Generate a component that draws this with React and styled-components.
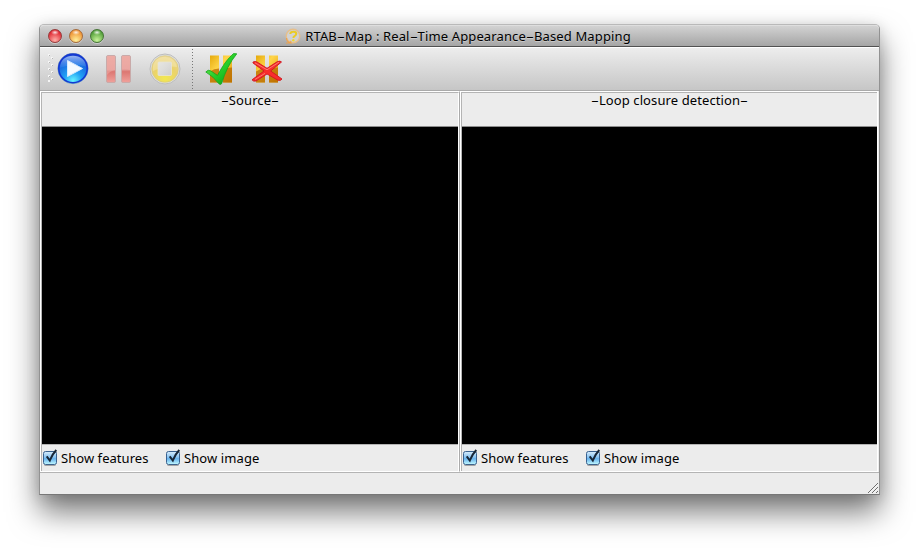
import React from 'react';
import styled, { createGlobalStyle } from 'styled-components';

const GlobalStyle = createGlobalStyle`
  * { box-sizing: border-box; }
  body { margin: 0; background: #fff; overflow: hidden; font-family: "Noto Sans", "Open Sans", sans-serif; font-size: 13px; color: #000; }
`;

const Desktop = styled.main`
  width: 919px;
  height: 549px;
  padding: 24px 39px 54px;
  overflow: hidden;
`;

const Window = styled.section`
  width: 841px;
  height: 471px;
  display: flex;
  flex-direction: column;
  background: #ececec;
  border: 1px solid #929292;
  border-top-color: #b9b9b9;
  border-bottom-color: #777;
  border-radius: 5px 5px 0 0;
  box-shadow: 0 17px 30px rgba(0, 0, 0, 0.53), 0 2px 14px rgba(0, 0, 0, 0.13);
`;

const TitleBar = styled.header`
  height: 22px;
  flex: none;
  display: grid;
  grid-template-columns: 100px 1fr 103px;
  align-items: center;
  background: linear-gradient(#d2d2d2, #a5a5a5);
  border-top: 1px solid #dedede;
  border-bottom: 1px solid #515151;
  border-radius: 4px 4px 0 0;
`;

const Lights = styled.div`
  display: flex;
  gap: 7px;
  padding-left: 8px;
`;

const Light = styled.span`
  width: 14px;
  height: 14px;
  border-radius: 50%;
  border: 1px solid ${(p) => p.$edge};
  background: radial-gradient(ellipse 4px 2.5px at 50% 20%, #fffd, #fff0),
    radial-gradient(circle at 50% 85%, ${(p) => p.$glow}, ${(p) => p.$tone} 75%);
  box-shadow: 0 1px 0 #ffffff66;
`;

const Title = styled.h1`
  display: flex;
  align-items: center;
  justify-content: center;
  gap: 4px;
  margin: 0;
  font-size: 13px;
  font-weight: 400;
  line-height: 20px;
  text-shadow: 0 1px 0 #ffffff55;
`;

const Label = styled.span`
  white-space: pre;
  letter-spacing: ${(p) => p.$spacing || 0}px;
`;

const Dash = styled.span`
  display: inline-block;
  width: 8px;
  text-align: center;
  letter-spacing: 0;
  transform: scaleX(1.9);
`;

const ToolBar = styled.nav`
  height: 44px;
  flex: none;
  display: flex;
  align-items: center;
  padding-left: 7px;
  background: linear-gradient(#ededed, #c6c6c6);
  border-top: 1px solid #fff;
  border-bottom: 1px solid #aaa;
`;

const Handle = styled.span`
  width: 10px;
  height: 30px;
  svg { display: block; }
`;

const ToolButton = styled.button`
  width: 32px;
  height: 32px;
  margin-right: ${(p) => p.$gap}px;
  padding: 0;
  border: 0;
  background: none;
  svg { display: block; }
`;

const Separator = styled.span`
  width: 1px;
  height: 41px;
  margin-right: 12px;
  background: repeating-linear-gradient(#777 0 1px, transparent 1px 3px);
`;

const Panels = styled.div`
  height: 382px;
  flex: none;
  display: grid;
  grid-template-columns: 420px 418px;
  border-bottom: 1px solid #b4b4b4;
`;

const Panel = styled.article`
  display: flex;
  flex-direction: column;
  border: 1px solid #fff;
  border-right: ${(p) => (p.$last ? '1px solid #fff' : '1px solid #aaa')};
`;

const PanelBody = styled.div`
  flex: 1;
  display: flex;
  flex-direction: column;
  border-top: 1px solid #b4b4b4;
  border-left: 1px solid #b4b4b4;
  border-right: ${(p) => (p.$last ? '0' : '1px solid #fff')};
`;

const PanelTitle = styled.h2`
  height: 34px;
  flex: none;
  margin: 0;
  font-size: 13px;
  font-weight: 400;
  line-height: 15px;
  text-align: center;
  border-bottom: 1px solid #8d8d8d;
`;

const Viewport = styled.div`
  height: 317px;
  flex: none;
  background: #000;
`;

const Options = styled.div`
  flex: 1;
  display: flex;
  align-items: center;
  border-top: 1px solid #b4b4b4;
`;

const Option = styled.label`
  display: flex;
  align-items: center;
  gap: 1px;
  width: ${(p) => p.$width}px;
  line-height: 18px;
`;

const StatusBar = styled.footer`
  flex: 1;
  display: flex;
  align-items: flex-end;
  justify-content: flex-end;
`;

const Grip = () => (
  <svg width="7" height="30" viewBox="0 0 7 30">
    {[0, 7, 14, 21].map((y) => (
      <g key={y} fill="#f5f5f5">
        <path d={`M1 ${y}h2v2H1zM4 ${y + 3}h2v2H4z`} />
        <path fill="#b5b5b5" d={`M2 ${y + 1}h1v1H2zM5 ${y + 4}h1v1H5z`} />
      </g>
    ))}
    <path fill="#f5f5f5" d="M1 26h2v2H1z" />
  </svg>
);

const PlayIcon = () => (
  <svg width="32" height="32" viewBox="0 0 32 32">
    <defs>
      <radialGradient id="playFill" cx=".5" cy=".9" r=".85">
        <stop offset="0" stopColor="#68f4ff" />
        <stop offset=".35" stopColor="#20a0f4" />
        <stop offset="1" stopColor="#1440cf" />
      </radialGradient>
      <linearGradient id="playGloss" x2="0" y2="1">
        <stop stopColor="#d5e5ff" stopOpacity=".7" />
        <stop offset="1" stopColor="#6db0ff" stopOpacity=".12" />
      </linearGradient>
    </defs>
    <circle cx="16" cy="15.5" r="15.2" fill="url(#playFill)" stroke="#7d98b5" strokeWidth=".7" />
    <circle cx="16" cy="15.5" r="14.2" fill="none" stroke="#1537d2" strokeWidth="1.5" />
    <path d="M3 15C3 7 9 2.8 16 2.8s13 4 13 11c-6-3-18-2-26 1z" fill="url(#playGloss)" />
    <path d="M10.5 7.5v16L25.5 15.5z" fill="#f4faff" stroke="#d6eaff" strokeLinejoin="round" />
  </svg>
);

const PauseIcon = () => (
  <svg width="32" height="32" viewBox="0 0 32 32">
    <defs>
      <linearGradient id="pauseFill" x2="0" y2="1">
        <stop stopColor="#eba39d" />
        <stop offset=".52" stopColor="#e49a96" />
        <stop offset=".6" stopColor="#dc7772" />
        <stop offset="1" stopColor="#f0a19b" />
      </linearGradient>
    </defs>
    <g fill="url(#pauseFill)" stroke="#c9aaa9">
      <rect x="3.5" y="2.5" width="9" height="27" rx="1.5" />
      <rect x="18.5" y="2.5" width="9" height="27" rx="1.5" />
    </g>
    <path d="M4 3h8v14q-5 1-8 5zM19 3h8v14q-4-1-8-.5z" fill="#f1b5b0" opacity=".45" />
  </svg>
);

const StopIcon = () => (
  <svg width="32" height="32" viewBox="0 0 32 32">
    <defs>
      <radialGradient id="stopFill" cx=".5" cy=".85" r=".85">
        <stop stopColor="#f2e850" />
        <stop offset=".55" stopColor="#ead26b" />
        <stop offset="1" stopColor="#eed99a" />
      </radialGradient>
      <linearGradient id="stopSquare" x2="1" y2="1">
        <stop stopColor="#e6e6e2" />
        <stop offset=".5" stopColor="#dcdcda" />
        <stop offset="1" stopColor="#cfcfcc" />
      </linearGradient>
    </defs>
    <circle cx="16" cy="16" r="15" fill="#dedede" stroke="#bdbdbd" />
    <circle cx="16" cy="16" r="13.3" fill="url(#stopFill)" stroke="#d4c780" strokeWidth=".6" />
    <path d="M4 13C6 6 10 4 16 4s11 4 12 10q-11-2-24 4z" fill="#f8eec0" opacity=".4" />
    <rect x="9" y="9" width="13.5" height="13.5" rx="1" fill="url(#stopSquare)" stroke="#e8e5d2" strokeWidth=".8" />
  </svg>
);

const GoldBars = ({ x, y }) => (
  <g transform={`translate(${x} ${y})`}>
    <path d="M0 0h9v27H0zM13 0h9v27h-9z" fill="url(#gold)" />
    <path d="M0 16q4-3 9-3v14H0zM13 13l9-1v15h-9z" fill="#b76a00" opacity=".75" />
  </g>
);

const AcceptIcon = () => (
  <svg width="32" height="32" viewBox="0 0 32 32">
    <defs>
      <linearGradient id="gold" x2="1" y2="1">
        <stop stopColor="#e5a90b" />
        <stop offset=".4" stopColor="#ffd549" />
        <stop offset="1" stopColor="#d99000" />
      </linearGradient>
      <linearGradient id="checkFill" x2="1" y2="1">
        <stop stopColor="#84f164" />
        <stop offset=".5" stopColor="#26cf29" />
        <stop offset="1" stopColor="#079414" />
      </linearGradient>
    </defs>
    <GoldBars x={5} y={2.5} />
    <path d="M.8 19Q3 16 6 18l6.5 4.4C18 12 23 5.5 28.5.6l3.3.2C25 9 20 19 16.6 30.7q-1.3 1.5-2.8 0Q8.5 23.5.8 19z" fill="url(#checkFill)" stroke="#16a51c" strokeWidth=".8" />
  </svg>
);

const RejectIcon = () => (
  <svg width="32" height="32" viewBox="0 0 32 32">
    <GoldBars x={5} y={2.5} />
    <path d="M2 9q2-1 4 0l10 6.3L26.5 8.5q3-1 4 .5L19.7 18 31 26q-1 2-4 1.2L16 21 5 28q-3 .6-4-1.2L13 18 2 10z" fill="#f82d2d" stroke="#cf1721" strokeWidth=".9" strokeLinejoin="round" />
    <path d="M4 9.8l12 7L28 9.2M4 26.4l10-6" fill="none" stroke="#ff8075" strokeWidth=".9" />
  </svg>
);

const AppIcon = () => (
  <svg width="16" height="16" viewBox="0 0 16 16">
    <circle cx="8" cy="8" r="6.8" fill="#d2d2d2" stroke="#e6bf8b" strokeWidth="1.4" />
    <path d="M1.5 10q0 4 4.5 5l-.3-2.3M1 15h5" fill="none" stroke="#eea34e" strokeWidth="1.1" />
    <path d="M5.3 6Q5.5 3.8 8.4 3.8t2.9 2.1Q11 7.3 9.2 8.3q-.8.5-.8 1.8" fill="none" stroke="#eacb24" strokeWidth="2" />
    <circle cx="8.3" cy="12.2" r="1.2" fill="#f1d72d" />
  </svg>
);

const CheckIcon = () => (
  <svg width="18" height="18" viewBox="0 0 18 18">
    <defs>
      <linearGradient id="boxFill" x2="0" y2="1">
        <stop stopColor="#d9edfb" />
        <stop offset=".45" stopColor="#87c2f1" />
        <stop offset=".55" stopColor="#68b2ed" />
        <stop offset="1" stopColor="#c3faff" />
      </linearGradient>
    </defs>
    <rect x="1.5" y="2.5" width="13" height="13" rx="2" fill="url(#boxFill)" stroke="#39618f" />
    <path d="M2.5 16.4h11" stroke="#888" strokeWidth=".8" />
    <path d="M4.7 7.3l3.1 4.2Q10 5.5 14.3 1" fill="none" stroke="#172536" strokeWidth="2" />
  </svg>
);

const ResizeGrip = () => (
  <svg width="12" height="12" viewBox="0 0 12 12">
    <path d="M1 11L11 1M5 11l6-6M9 11l2-2" stroke="#6e6e6e" />
    <path d="M2.2 11.2l9-9M6.2 11.2l5-5" stroke="#fff" strokeWidth=".6" />
  </svg>
);

const ImagePanel = ({ title, spacing, last }) => (
  <Panel $last={last}>
    <PanelBody $last={last}>
      <PanelTitle>
        <Label $spacing={spacing}><Dash>-</Dash>{title}<Dash>-</Dash></Label>
      </PanelTitle>
      <Viewport />
      <Options>
        <Option $width={123}><CheckIcon /><Label $spacing={0.05}>Show features</Label></Option>
        <Option><CheckIcon /><Label $spacing={0.1}>Show image</Label></Option>
      </Options>
    </PanelBody>
  </Panel>
);

export default function App() {
  return (
    <>
      <GlobalStyle />
      <Desktop>
        <Window>
          <TitleBar>
            <Lights>
              <Light $edge="#963b3b" $tone="#df2530" $glow="#ffb0a8" />
              <Light $edge="#a56a3a" $tone="#ee9132" $glow="#fff09a" />
              <Light $edge="#457435" $tone="#4f9d36" $glow="#c9f49b" />
            </Lights>
            <Title>
              <AppIcon />
              <Label $spacing={0.13}>RTAB<Dash>-</Dash>Map : Real<Dash>-</Dash>Time Appearance<Dash>-</Dash>Based Mapping</Label>
            </Title>
          </TitleBar>
          <ToolBar>
            <Handle><Grip /></Handle>
            <ToolButton aria-label="Play" $gap={14}><PlayIcon /></ToolButton>
            <ToolButton aria-label="Pause" $gap={14}><PauseIcon /></ToolButton>
            <ToolButton aria-label="Stop" $gap={11}><StopIcon /></ToolButton>
            <Separator />
            <ToolButton aria-label="Accept" $gap={14}><AcceptIcon /></ToolButton>
            <ToolButton aria-label="Reject" $gap={0}><RejectIcon /></ToolButton>
          </ToolBar>
          <Panels>
            <ImagePanel title="Source" spacing={0.1} />
            <ImagePanel title="Loop closure detection" spacing={0.1} last />
          </Panels>
          <StatusBar><ResizeGrip /></StatusBar>
        </Window>
      </Desktop>
    </>
  );
}
